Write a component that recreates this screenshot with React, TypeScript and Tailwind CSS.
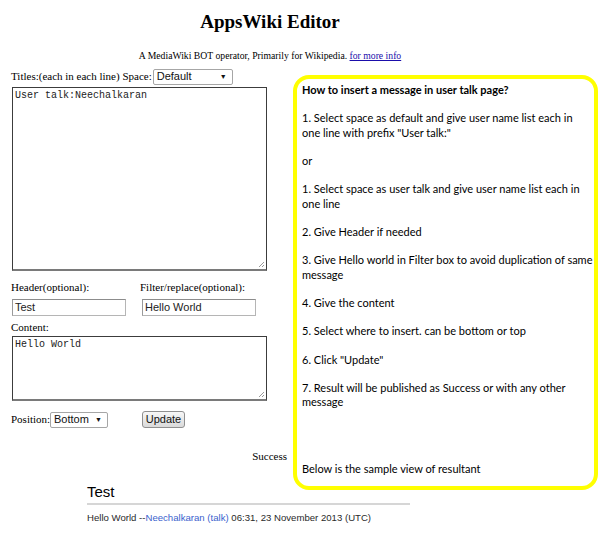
import React from "react";

const serif = { fontFamily: '"Liberation Serif", "Times New Roman", serif' };

function Select({ value, w }: { value: string; w: string }) {
  return (
    <div
      className={`${w} h-[16px] border border-[#a6a6a6] rounded-[2px] bg-white flex items-center justify-between pl-[3px] pr-[5px] text-[11px] text-[#111] font-['Liberation_Sans',Arial,sans-serif] leading-none`}
    >
      <span>{value}</span>
      <span className="text-[7px] leading-none">▼</span>
    </div>
  );
}

function Grip() {
  return (
    <svg className="absolute right-[1px] bottom-[1px]" width="8" height="8" viewBox="0 0 8 8">
      <path d="M7 2 L2 7 M7 5 L5 7" stroke="#999" strokeWidth="1" />
    </svg>
  );
}

function TextArea({ text, h }: { text: string; h: string }) {
  return (
    <div
      className={`relative w-[255px] ${h} border border-[#3c3c3c] border-b-2 border-b-[#7a7a7a] bg-white px-[2px] pt-[2px] text-[10px] leading-[12px] text-[#222] font-['Liberation_Mono','Courier_New',monospace] whitespace-pre`}
    >
      {text}
      <Grip />
    </div>
  );
}

function Input({ value }: { value: string }) {
  return (
    <div className="w-[114px] h-[17px] border border-[#b5b5b5] border-t-[#8c8c8c] border-l-[#9a9a9a] bg-white pl-[2px] flex items-center text-[11px] text-[#222] font-['Liberation_Sans',Arial,sans-serif]">
      {value}
    </div>
  );
}

const helpLines: (string | null)[] = [
  "1. Select space as default and give user name list each in",
  'one line with prefix "User talk:"',
  null,
  "or",
  null,
  "1. Select space as user talk and give user name list each in",
  "one line",
  null,
  "2. Give Header if needed",
  null,
  "3. Give Hello world in Filter box to avoid duplication of same",
  "message",
  null,
  "4. Give the content",
  null,
  "5. Select where to insert. can be bottom or top",
  null,
  '6. Click "Update"',
  null,
  "7. Result will be published as Success or with any other",
  "message",
];

export default function App() {
  return (
    <div className="w-[600px] h-[545px] bg-white overflow-hidden text-black" style={serif}>
      <div className="w-[540px] text-center">
        <h1 className="pt-[10px] text-[19px] leading-[24px] font-bold">AppsWiki Editor</h1>
        <p className="mt-[15px] text-[9.7px] leading-[14px]">
          A MediaWiki BOT operator, Primarily for Wikipedia.{" "}
          <span className="text-[#1a0dab] underline">for more info</span>
        </p>
      </div>

      <div className="mt-[5px]">
        <div className="float-right mr-[2px] mt-[7px] w-[305px] h-[415px] border-4 border-[#ffff00] rounded-[16px] pl-[5px] pt-[4px] text-[11px] leading-[14.2px] text-black font-['Lato','Open_Sans',sans-serif] whitespace-nowrap flex flex-col overflow-hidden">
          <div className="font-bold">How to insert a message in user talk page?</div>
          <div className="h-[14.2px]" />
          {helpLines.map((l, i) =>
            l === null ? <div key={i} className="h-[14.2px]" /> : <div key={i}>{l}</div>
          )}
          <div className="mt-auto mb-[10px]">Below is the sample view of resultant</div>
        </div>

        <div className="w-[290px] pl-[11px] text-[11px]">
          <div className="h-[17px] flex items-center gap-[1px]">
            <span>Titles:(each in each line) Space:</span>
            <Select value="Default" w="w-[80px]" />
          </div>
          <div className="mt-[2px] pl-[1px]">
            <TextArea text="User talk:Neechalkaran" h="h-[184px]" />
          </div>
          <div className="mt-[9px] flex leading-[14px]">
            <span className="w-[129px]">Header(optional):</span>
            <span>Filter/replace(optional):</span>
          </div>
          <div className="mt-[5px] flex pl-[1px]">
            <div className="w-[130px]">
              <Input value="Test" />
            </div>
            <Input value="Hello World" />
          </div>
          <div className="mt-[4px] leading-[14px]">Content:</div>
          <div className="mt-[2px] pl-[1px]">
            <TextArea text="Hello World" h="h-[65px]" />
          </div>
          <div className="mt-[10px] h-[17px] flex items-center">
            <span className="w-[39px] whitespace-nowrap">Position:</span>
            <Select value="Bottom" w="w-[58px]" />
            <button className="ml-[34px] w-[43px] h-[17px] border border-[#8f8f8f] rounded-[3px] bg-gradient-to-b from-[#f7f7f7] to-[#dadada] text-[11px] leading-none text-[#111] font-['Liberation_Sans',Arial,sans-serif]">
              Update
            </button>
          </div>
          <div className="mt-[21px] text-right pr-[3px] leading-[14px]">Success</div>
        </div>

        <div className="pl-[87px] mt-[20px] font-['Liberation_Sans',Arial,sans-serif]">
          <div className="text-[15px] leading-[18px] text-black">Test</div>
          <div className="w-[323px] h-[2px] bg-[#d6d6d6] mt-[2px]" />
          <div className="mt-[6px] text-[9.6px] leading-[13px] text-[#2a2a2a] whitespace-nowrap">
            Hello World --<span className="text-[#3a5fcd]">Neechalkaran</span>{" "}
            <span className="text-[#3a5fcd]">(talk)</span> 06:31, 23 November 2013 (UTC)
          </div>
        </div>
      </div>
    </div>
  );
}
